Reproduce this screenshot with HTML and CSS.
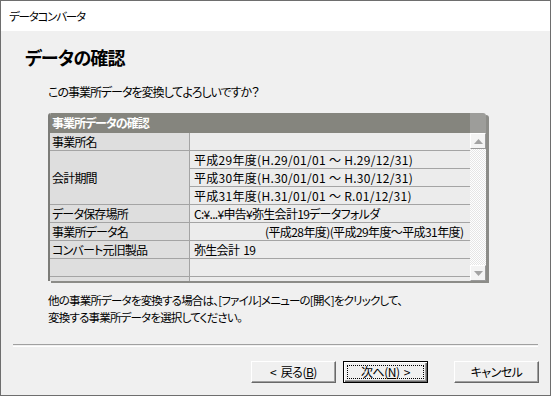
FILE: index.html
```html
<!DOCTYPE html>
<html lang="ja">
<head>
<meta charset="utf-8">
<title>データコンバータ</title>
<link rel="stylesheet" href="styles.css">
</head>
<body>
<div class="window">
  <div class="titlebar">データコンバータ</div>
  <div class="content">
    <h1 class="heading">データの確認</h1>
    <p class="lead">この事業所データを変換してよろしいですか？</p>
    <div class="panel">
      <div class="tbl">
        <div class="tbl-head">事業所データの確認</div>
        <div class="rows">
          <div class="lbl">事業所名</div><div class="val"></div>
          <div class="lbl span3">会計期間</div>
          <div class="val num">平成29年度(H.29/01/01 ～ H.29/12/31)</div>
          <div class="val num">平成30年度(H.30/01/01 ～ H.30/12/31)</div>
          <div class="val num">平成31年度(H.31/01/01 ～ R.01/12/31)</div>
          <div class="lbl">データ保存場所</div><div class="val">C:¥...¥申告¥弥生会計19データフォルダ</div>
          <div class="lbl">事業所データ名</div><div class="val indent">(平成28年度)(平成29年度～平成31年度)</div>
          <div class="lbl">コンバート元旧製品</div><div class="val">弥生会計&nbsp;&nbsp;19</div>
          <div class="lbl"></div><div class="val"></div>
          <div class="lbl"></div><div class="val"></div>
        </div>
      </div>
      <div class="sb">
        <div class="sb-top"></div>
        <div class="sb-btn"><svg width="9" height="5" viewBox="0 0 9 5"><path d="M0 5 L4.5 0 L9 5 Z" fill="#a3a3a3"/></svg></div>
        <div class="sb-track"></div>
        <div class="sb-btn"><svg width="9" height="5" viewBox="0 0 9 5"><path d="M0 0 L4.5 5 L9 0 Z" fill="#a3a3a3"/></svg></div>
      </div>
    </div>
    <p class="note">他の事業所データを変換する場合は、[ファイル]メニューの[開く]をクリックして、<br>変換する事業所データを選択してください。</p>
  </div>
  <div class="sep"></div>
  <div class="buttons">
    <button class="btn">&lt;&nbsp;&nbsp;戻る(<u>B</u>)</button>
    <button class="btn default"><span class="focus">次へ(<u>N</u>)&nbsp;&nbsp;&gt;</span></button>
    <button class="btn cancel">キャンセル</button>
  </div>
</div>
</body>
</html>
```
FILE: styles.css
```css
html, body {
  margin: 0;
  padding: 0;
  background: #f0f0f0;
}
body {
  font-family: "Noto Sans CJK JP", "Noto Sans", sans-serif;
  font-size: 12px;
  color: #000;
  font-feature-settings: "palt";
}
.window {
  box-sizing: border-box;
  width: 551px;
  height: 396px;
  border: 1px solid #6e6e6e;
  background: #f0f0f0;
  display: flex;
  flex-direction: column;
}
.titlebar {
  height: 30px;
  background: #fff;
  padding-left: 8px;
  line-height: 30px;
  font-size: 11.5px;
  letter-spacing: -1.2px;
}
.content {
  padding-left: 47px;
  display: flex;
  flex-direction: column;
}
.heading {
  margin: 15px 0 0 -23px;
  font-size: 18px;
  line-height: 22px;
  font-weight: bold;
  letter-spacing: -0.8px;
}
.lead {
  margin: 17px 0 0 0;
  line-height: 14px;
  letter-spacing: -1px;
}
.panel {
  margin-top: 14px;
  width: 436px;
  height: 168px;
  border-left: 2px solid #7c7c78;
  border-radius: 3px 3px 0 0;
  box-shadow: 3px 2px 0 #8c8c88;
  display: flex;
  overflow: hidden;
}
.tbl {
  flex: 1;
  display: flex;
  flex-direction: column;
  background: #ececec;
}
.tbl-head {
  height: 20px;
  background: #85857e;
  color: #fff;
  font-weight: bold;
  line-height: 20px;
  padding-left: 2px;
  letter-spacing: -1px;
  flex-shrink: 0;
}
.rows {
  flex: 1;
  display: grid;
  grid-template-columns: 140px 1fr;
  grid-auto-rows: 18px;
  overflow: hidden;
}
.lbl, .val {
  box-sizing: border-box;
  border-bottom: 1px solid #a4a4a4;
  line-height: 17px;
  white-space: nowrap;
  overflow: hidden;
}
.lbl {
  background: #dedede;
  border-right: 1px solid #a4a4a4;
  padding-left: 2px;
  letter-spacing: -0.8px;
}
.val {
  padding-left: 4px;
  letter-spacing: -0.7px;
}
.val.num {
  letter-spacing: 0.3px;
}
.val.indent {
  padding-left: 75px;
  letter-spacing: -0.6px;
}
.span3 {
  grid-row: span 3;
  display: flex;
  align-items: center;
}
.sb {
  width: 16px;
  display: flex;
  flex-direction: column;
  flex-shrink: 0;
}
.sb-top {
  height: 20px;
  background: #9d9d9a;
}
.sb-btn {
  box-sizing: border-box;
  height: 16px;
  background: #f4f4f4;
  border-top: 1px solid #fff;
  border-left: 1px solid #fff;
  border-right: 1px solid #9a9a9a;
  border-bottom: 1px solid #9a9a9a;
  display: flex;
  align-items: center;
  justify-content: center;
}
.sb-track {
  flex: 1;
  background-color: #fff;
  background-image: repeating-conic-gradient(#e6e6e6 0 25%, #fff 0 50%);
  background-size: 2px 2px;
}
.note {
  margin: 11px 0 0 0;
  font-size: 11.5px;
  line-height: 17px;
  letter-spacing: -0.8px;
}
.sep {
  margin: 18px 12px 0 12px;
  height: 1px;
  border-top: 1px solid #a0a0a0;
  border-bottom: 1px solid #fff;
}
.buttons {
  margin-top: 14px;
  display: flex;
  padding-left: 250px;
}
.btn {
  box-sizing: border-box;
  width: 85px;
  height: 22px;
  padding: 0;
  font: inherit;
  font-size: 12px;
  letter-spacing: -0.5px;
  background: #f0f0f0;
  color: #000;
  border-style: solid;
  border-width: 1px;
  border-color: #fff #696969 #696969 #fff;
  box-shadow: inset -1px -1px 0 #a0a0a0;
  line-height: 18px;
}
.btn.default {
  margin-left: 7px;
  border: 1px solid #000;
  box-shadow: inset 1px 1px 0 #fff, inset -1px -1px 0 #696969, inset -2px -2px 0 #a0a0a0;
  display: flex;
  align-items: center;
  justify-content: center;
  padding: 3px;
}
.focus {
  flex: 1;
  align-self: stretch;
  border: 1px dotted #000;
  line-height: 12px;
  display: flex;
  align-items: center;
  justify-content: center;
}
.btn.cancel {
  margin-left: 26px;
}
```
